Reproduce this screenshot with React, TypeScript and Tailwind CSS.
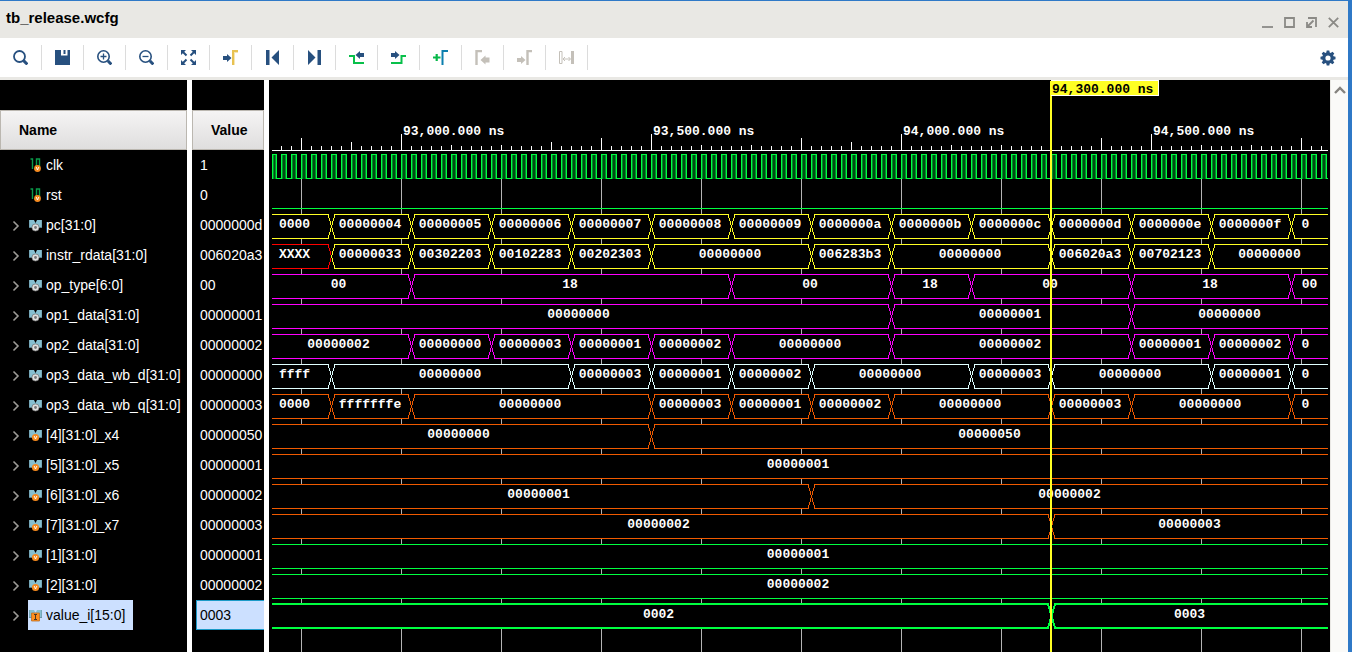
import { useLayoutEffect, useRef, useState, type ReactNode } from 'react'

type IconKind = 'scalar' | 'bus' | 'busVar' | 'busConst'

interface Signal {
  name: string
  value: string
  icon: IconKind
  selected?: boolean
}

interface Bus {
  color: string
  // values.length === edges.length + 1
  edges: number[]
  values: string[]
  firstColor?: string
  bold?: boolean
}

const NAVY = '#27507f'
const GRAY = '#c4c0b9'
const GREEN = '#00ff40'
const YELLOW = '#ffff24'
const MAGENTA = '#ff00ff'
const CYAN = '#e0ffff'
const ORANGE = '#f05a00'

const signals: Signal[] = [
  { name: 'clk', value: '1', icon: 'scalar' },
  { name: 'rst', value: '0', icon: 'scalar' },
  { name: 'pc[31:0]', value: '0000000d', icon: 'bus' },
  { name: 'instr_rdata[31:0]', value: '006020a3', icon: 'bus' },
  { name: 'op_type[6:0]', value: '00', icon: 'bus' },
  { name: 'op1_data[31:0]', value: '00000001', icon: 'bus' },
  { name: 'op2_data[31:0]', value: '00000002', icon: 'bus' },
  { name: 'op3_data_wb_d[31:0]', value: '00000000', icon: 'bus' },
  { name: 'op3_data_wb_q[31:0]', value: '00000003', icon: 'bus' },
  { name: '[4][31:0]_x4', value: '00000050', icon: 'busVar' },
  { name: '[5][31:0]_x5', value: '00000001', icon: 'busVar' },
  { name: '[6][31:0]_x6', value: '00000002', icon: 'busVar' },
  { name: '[7][31:0]_x7', value: '00000003', icon: 'busVar' },
  { name: '[1][31:0]', value: '00000001', icon: 'busVar' },
  { name: '[2][31:0]', value: '00000002', icon: 'busVar' },
  { name: 'value_i[15:0]', value: '0003', icon: 'busConst', selected: true },
]

const buses: Bus[] = [
  {
    color: YELLOW,
    edges: [92860, 93020, 93180, 93340, 93500, 93660, 93820, 93980, 94140, 94300, 94460, 94620, 94780],
    values: ['00000003', '00000004', '00000005', '00000006', '00000007', '00000008', '00000009', '0000000a', '0000000b', '0000000c', '0000000d', '0000000e', '0000000f', '00000010'],
  },
  {
    color: YELLOW,
    firstColor: '#ff0000',
    edges: [92860, 93020, 93180, 93340, 93500, 93820, 93980, 94300, 94460, 94620],
    values: ['XXXXXXXX', '00000033', '00302203', '00102283', '00202303', '00000000', '006283b3', '00000000', '006020a3', '00702123', '00000000'],
  },
  {
    color: MAGENTA,
    edges: [93020, 93660, 93980, 94140, 94460, 94780],
    values: ['00', '18', '00', '18', '00', '18', '00'],
  },
  { color: MAGENTA, edges: [93980, 94460], values: ['00000000', '00000001', '00000000'] },
  {
    color: MAGENTA,
    edges: [93020, 93180, 93340, 93500, 93660, 93980, 94460, 94620, 94780],
    values: ['00000002', '00000000', '00000003', '00000001', '00000002', '00000000', '00000002', '00000001', '00000002', '00000000'],
  },
  {
    color: CYAN,
    edges: [92860, 93340, 93500, 93660, 93820, 94140, 94300, 94620, 94780],
    values: ['ffffffff', '00000000', '00000003', '00000001', '00000002', '00000000', '00000003', '00000000', '00000001', '00000000'],
  },
  {
    color: ORANGE,
    edges: [92860, 93020, 93500, 93660, 93820, 93980, 94300, 94460, 94780],
    values: ['00000000', 'fffffffe', '00000000', '00000003', '00000001', '00000002', '00000000', '00000003', '00000000', '00000000'],
  },
  { color: ORANGE, edges: [93500], values: ['00000000', '00000050'] },
  { color: ORANGE, edges: [], values: ['00000001'] },
  { color: ORANGE, edges: [93820], values: ['00000001', '00000002'] },
  { color: ORANGE, edges: [94300], values: ['00000002', '00000003'] },
  { color: GREEN, edges: [], values: ['00000001'] },
  { color: GREEN, edges: [], values: ['00000002'] },
  { color: GREEN, edges: [94300], values: ['0002', '0003'], bold: true },
]

const ROW = 30
const FIRST_BUS = 134
const LEFT = 3
const CURSOR = 94300

// Top of each 100 ns tick, repeating every 1000 ns
const TICK_TOPS = [54, 65, 65, 62, 58, 54, 65, 65, 58, 62]

// 1 px per 2 ns, 93,000 ns sits at x = 132
const xAt = (ns: number) => 132 + (ns - 93000) / 2

// Shorten a bus value so that it fits between two transitions
function fit(text: string, width: number) {
  if (text.length * 8 <= width - 12) return text
  return text.slice(0, Math.max(0, Math.floor((width - 24) / 8)))
}

function BusWave({ bus, top, right }: { bus: Bus; top: number; right: number }) {
  const bottom = top + 24
  const xs = bus.edges.map(xAt).filter((x) => x < right - 4)
  const starts = [LEFT, ...xs]
  const sw = bus.bold ? 2 : 1
  const o = bus.bold ? 0 : 0.5

  return (
    <g>
      <rect x={LEFT} y={top} width={right - LEFT} height={25} fill="#000" />
      {starts.map((start, i) => {
        const end = xs[i] ?? right
        const first = i === 0
        const last = i === xs.length
        const mid = top + 12 + o
        let d = ''
        if (first) {
          d = `M${start} ${top + o}H`
        } else {
          d = `M${start + 0.5} ${mid}L${start + 4} ${top + o}H`
        }
        d += last ? `${end}` : `${end - 3}L${end + 0.5} ${mid}L${end - 3} ${bottom + o}`
        if (last) d += `M${end} ${bottom + o}`
        d += `H${first ? start : start + 4}`
        if (!first) d += `L${start + 0.5} ${mid}`
        const from = first ? -1 : start
        const to = last ? right + 2 : end
        const text = fit(bus.values[i], end - start + (first ? 3 : 2))
        const cut = text !== bus.values[i]
        return (
          <g key={start}>
            <path
              d={d}
              fill="none"
              stroke={first && bus.firstColor ? bus.firstColor : bus.color}
              strokeWidth={sw}
              shapeRendering="crispEdges"
            />
            <text x={(from + to) / 2 - (cut ? 5 : 1)} y={top + 14} textAnchor="middle" fill="#fff">
              {text}
            </text>
          </g>
        )
      })}
    </g>
  )
}

function Ruler({ right }: { right: number }) {
  const ticks: ReactNode[] = []
  for (let ns = 92760; xAt(ns) < right; ns += 20) {
    const x = xAt(ns) + 0.5
    const y = ns % 100 === 0 ? TICK_TOPS[(ns % 1000) / 100] : 66
    ticks.push(<path key={ns} d={`M${x} ${y}V70`} />)
  }
  return (
    <g stroke="#fff" shapeRendering="crispEdges">
      {ticks}
      <path d={`M${LEFT} 70.5H${right}`} />
    </g>
  )
}

function Clock({ right }: { right: number }) {
  const pulses: ReactNode[] = []
  let d = `M${LEFT} 74.5`
  for (let ns = 92740; xAt(ns) < right; ns += 20) {
    const x0 = Math.max(LEFT, xAt(ns))
    const x1 = Math.min(right, xAt(ns) + 5)
    if (x1 <= LEFT) continue
    pulses.push(
      <g key={ns}>
        <rect x={x0} y={75} width={x1 - x0} height={24} fill="#00902a" />
        <rect x={x0 + 2} y={75} width={Math.max(0, x1 - x0 - 3)} height={24} fill="#004d14" />
      </g>,
    )
    d += `M${x0 + 0.5} 98.5V74.5H${x1 + 0.5}V98.5H${Math.min(right, xAt(ns) + 10)}`
  }
  return (
    <g shapeRendering="crispEdges">
      {pulses}
      <path d={d} fill="none" stroke={GREEN} />
    </g>
  )
}

function WaveView() {
  const ref = useRef<HTMLDivElement>(null)
  const [size, setSize] = useState({ width: 1061, height: 572 })

  useLayoutEffect(() => {
    const el = ref.current
    if (!el) return
    const measure = () => setSize({ width: el.clientWidth, height: el.clientHeight })
    measure()
    const observer = new ResizeObserver(measure)
    observer.observe(el)
    return () => observer.disconnect()
  }, [])

  const right = size.width - 2
  const grid: number[] = []
  for (let ns = 92800; xAt(ns) < right; ns += 200) grid.push(xAt(ns))
  const labels = [93000, 93500, 94000, 94500].filter((ns) => xAt(ns) < right)
  const cx = xAt(CURSOR)
  const fmt = (ns: number) => `${ns.toLocaleString('en-US')}.000 ns`

  return (
    <div ref={ref} className="min-w-0 flex-1 overflow-hidden bg-black">
      <svg
        className="block h-full w-full font-['Liberation_Mono',monospace] text-[13px] font-bold"
        role="img"
        aria-label="Waveforms"
      >
        <g stroke="#b4b4b4" shapeRendering="crispEdges">
          {grid.map((x) => (
            <path key={x} d={`M${x + 0.5} 99V${size.height}`} />
          ))}
        </g>
        <Ruler right={right} />
        {labels.map((ns) => (
          <text key={ns} x={xAt(ns) + 2} y={55} fill="#fff">
            {fmt(ns)}
          </text>
        ))}
        <Clock right={right} />
        <path d={`M${LEFT} 128.5H${right}`} stroke={GREEN} shapeRendering="crispEdges" />
        {buses.map((bus, i) => (
          <BusWave key={i} bus={bus} top={FIRST_BUS + i * ROW} right={right} />
        ))}
        <rect x={cx - 1} y={1} width={2} height={size.height} fill={YELLOW} />
        <rect x={cx} y={0} width={108} height={16} fill="#fff" />
        <rect x={cx} y={1} width={107} height={14} fill={YELLOW} />
        <text x={cx + 1} y={13} fill="#000">
          {fmt(CURSOR)}
        </text>
      </svg>
    </div>
  )
}

function SignalIcon({ kind }: { kind: IconKind }) {
  if (kind === 'scalar') {
    return (
      <svg width="13" height="16" viewBox="0 0 13 16" className="shrink-0">
        <path d="M1.500 2h2v10M5 12h2.500V2h3v7" fill="none" stroke="#0a9a4a" strokeWidth="1.400" />
        <circle cx="8.500" cy="11.500" r="3.400" fill="#f58a1f" />
        <path d="M7.200 10l1.300 3 1.300-3" fill="none" stroke="#fff" strokeWidth=".9" />
      </svg>
    )
  }
  return (
    <svg width="13" height="16" viewBox="0 0 13 16" className="shrink-0">
      <path d="M0 3h5l1.500 3L8 3h5v7.500H8.500L6.500 7l-2 3.500H0z" fill="#86bfd0" />
      <path d="M0 3v7.500h3.500M13 3v7.500h-3.500" fill="none" stroke="#5d8795" strokeWidth=".8" />
      {kind === 'bus' && (
        <>
          <circle cx="6.500" cy="10.500" r="3.600" fill="#dedede" stroke="#6b6b6b" strokeWidth=".7" />
          <circle cx="6.500" cy="10.500" r="1.400" fill="#777" />
        </>
      )}
      {kind === 'busVar' && (
        <>
          <circle cx="6.500" cy="10.500" r="3.600" fill="#f58a1f" />
          <path d="M5.200 9l1.300 3 1.300-3" fill="none" stroke="#fff" strokeWidth=".9" />
        </>
      )}
      {kind === 'busConst' && (
        <>
          <path d="M2.500 6h8v8h-8z" fill="#ff8f1c" stroke="#b8702a" strokeWidth=".8" />
          <path d="M5 7.500h3M5 12.500h3M6.500 7.500v5" stroke="#4a3520" strokeWidth="1" />
        </>
      )}
    </svg>
  )
}

const tools: { label: string; disabled?: boolean; art: ReactNode }[] = [
  {
    label: 'Search',
    art: (
      <>
        <circle cx="6.500" cy="6.500" r="5.500" fill="none" stroke={NAVY} strokeWidth="1.800" />
        <path d="M10.600 10.600l3.800 3.800" stroke={NAVY} strokeWidth="3" />
      </>
    ),
  },
  {
    label: 'Save',
    art: <path d="M0 0h6v5.500h6.500V0H15v15H0zM8.500 0h2v4h-2z" fill={NAVY} />,
  },
  {
    label: 'Zoom in',
    art: (
      <>
        <circle cx="6.500" cy="6.500" r="5.700" fill="none" stroke={NAVY} strokeWidth="1.600" />
        <path d="M10.800 10.800l3.600 3.600" stroke={NAVY} strokeWidth="3" />
        <path d="M3.500 6.500h6M6.500 3.500v6" stroke={NAVY} strokeWidth="1.300" />
      </>
    ),
  },
  {
    label: 'Zoom out',
    art: (
      <>
        <circle cx="6.500" cy="6.500" r="5.700" fill="none" stroke={NAVY} strokeWidth="1.600" />
        <path d="M10.800 10.800l3.600 3.600" stroke={NAVY} strokeWidth="3" />
        <path d="M3.500 6.500h6" stroke={NAVY} strokeWidth="1.300" />
      </>
    ),
  },
  {
    label: 'Zoom fit',
    art: (
      <>
        <path d="M0 0h5L0 5zM15 0v5l-5-5zM0 15v-5l5 5zM15 15h-5l5-5z" fill={NAVY} />
        <path d="M1.500 1.500L5.500 5.500M13.500 1.500l-4 4M1.500 13.500l4-4M13.500 13.500l-4-4" stroke={NAVY} strokeWidth="2" />
      </>
    ),
  },
  {
    label: 'Go to cursor',
    art: (
      <>
        <path d="M0 6h4V4l4.500 4L4 12v-2H0z" fill={NAVY} />
        <path d="M9 0h6v3h-3v12H9z" fill="#f6e6b4" />
        <path d="M9 0h6v2h-4v13H9z" fill="#e8c252" />
      </>
    ),
  },
  {
    label: 'Go to start',
    art: <path d="M1 0h3.500v15H1zM14 0v15L6.500 7.500z" fill={NAVY} />,
  },
  {
    label: 'Go to end',
    art: <path d="M1 0v15l7.500-7.500zM10.500 0H14v15h-3.500z" fill={NAVY} />,
  },
  {
    label: 'Previous transition',
    art: (
      <>
        <path d="M0 6h5v7h10" fill="none" stroke="#08c04a" strokeWidth="2" />
        <path d="M15 3h-4V1L6.500 5 11 9V7h4z" fill={NAVY} />
      </>
    ),
  },
  {
    label: 'Next transition',
    art: (
      <>
        <path d="M0 13h10.500V6H15" fill="none" stroke="#08c04a" strokeWidth="2" />
        <path d="M0 3h4V1l4.500 4L4 9V7H0z" fill={NAVY} />
      </>
    ),
  },
  {
    label: 'Add marker',
    art: (
      <>
        <path d="M0 7.500h7.500M3.700 4v7" stroke="#08b84a" strokeWidth="2.200" />
        <path d="M9.500 15V1H15" fill="none" stroke="#0b7fae" strokeWidth="2" />
      </>
    ),
  },
  {
    label: 'Previous marker',
    disabled: true,
    art: (
      <>
        <path d="M1.500 15V1H7" fill="none" stroke={GRAY} strokeWidth="2.400" />
        <path d="M14.500 7.500h-4v-2L5.500 10l5 4.500v-2h4z" fill={GRAY} />
      </>
    ),
  },
  {
    label: 'Next marker',
    disabled: true,
    art: (
      <>
        <path d="M10.500 15V1H15" fill="none" stroke={GRAY} strokeWidth="2.400" />
        <path d="M0 8h4V6l4.500 4L4 14v-2H0z" fill={GRAY} />
      </>
    ),
  },
  {
    label: 'Swap cursors',
    disabled: true,
    art: (
      <>
        <path d="M.5 1.500h2.500v12H.5z" fill="none" stroke={GRAY} />
        <path d="M12 1h3v13h-3z" fill={GRAY} />
        <path d="M4 9h7M6 7L4 9l2 2M9.500 7l2 2-2 2" fill="none" stroke={GRAY} />
      </>
    ),
  },
]

const windowButtons = [
  { label: 'Minimize', d: 'M0 10h11' },
  { label: 'Maximize', d: 'M1 1h9v9H1z' },
  { label: 'Float', d: 'M2 1h8v9M7.500 3.500L2 9M1 5v5h5' },
  { label: 'Close', d: 'M.8 .8l9.400 9.400M10.200 .8L.8 10.200' },
]

function Chevron() {
  return (
    <svg width="8" height="12" viewBox="0 0 8 12" fill="none">
      <path d="M1.500 1.500L6 6l-4.500 4.500" stroke="#9c9a96" strokeWidth="1.600" />
    </svg>
  )
}

export default function App() {
  return (
    <div className="flex h-screen flex-col overflow-hidden border-t border-r-4 border-[#2f79c7] bg-white font-['Liberation_Sans',Arial,sans-serif] text-sm text-black">
      <header className="flex h-[37px] shrink-0 items-center justify-between bg-[#e9e8e4] pr-[9px] pl-1.5">
        <h1 className="pb-1 text-[15px] font-bold">tb_release.wcfg</h1>
        <div className="flex gap-[11px] pt-1.5">
          {windowButtons.map((b) => (
            <button key={b.label} type="button" aria-label={b.label}>
              <svg width="11" height="11" viewBox="0 0 11 11" fill="none" stroke="#8b8a86" strokeWidth="1.800">
                <path d={b.d} />
              </svg>
            </button>
          ))}
        </div>
      </header>

      {/* Toolbar */}
      <div className="flex h-[42px] shrink-0 items-center justify-between border-b-3 border-[#e9e8e4] pr-3">
        <div className="flex">
          {tools.map((tool) => (
            <button
              key={tool.label}
              type="button"
              aria-label={tool.label}
              disabled={tool.disabled}
              className="flex h-[25px] w-[42px] items-center justify-center border-r border-[#dcdcdc]"
            >
              <svg width="15" height="15" viewBox="0 0 15 15">
                {tool.art}
              </svg>
            </button>
          ))}
        </div>
        <button type="button" aria-label="Settings">
          <svg width="16" height="16" viewBox="0 0 16 16" fill={NAVY}>
            <path
              fillRule="evenodd"
              d="M6.700 .5h2.600l.4 2 1 .4 1.700-1.200 1.900 1.900-1.200 1.700.4 1 2 .4v2.600l-2 .4-.4 1 1.200 1.700-1.900 1.900-1.700-1.200-1 .4-.4 2H6.700l-.4-2-1-.4-1.700 1.200-1.900-1.900 1.200-1.700-.4-1-2-.4V6.700l2-.4.4-1-1.200-1.700 1.900-1.900 1.700 1.200 1-.4zM8 5.400a2.600 2.600 0 1 0 0 5.200 2.600 2.600 0 0 0 0-5.200z"
            />
          </svg>
        </button>
      </div>

      <main className="flex min-h-0 flex-1">
        {/* Signal names */}
        <section className="w-[187px] shrink-0 overflow-hidden bg-black pt-[30px] text-white">
          <h2 className="flex h-10 items-center border border-[#bbb7b0] bg-linear-to-b from-[#f5f4f4] to-[#dfdede] pl-[18px] font-bold text-black">
            Name
          </h2>
          <ul>
            {signals.map((s) => (
              <li key={s.name} className="flex h-[30px] items-center">
                {s.icon === 'scalar' ? (
                  <span className="w-7" />
                ) : (
                  <button type="button" aria-label={`Expand ${s.name}`} className="flex w-7 shrink-0 pt-0.5 pl-3">
                    <Chevron />
                  </button>
                )}
                <span
                  className={
                    s.selected
                      ? 'flex h-full items-center gap-1 bg-[#cce0ff] pr-2 pl-px text-black'
                      : 'flex h-full items-center gap-1 pl-px'
                  }
                >
                  <SignalIcon kind={s.icon} />
                  <span className="whitespace-nowrap">{s.name}</span>
                </span>
              </li>
            ))}
          </ul>
        </section>

        {/* Values at the cursor */}
        <section className="ml-[5px] w-[72px] shrink-0 overflow-hidden bg-black pt-[30px] text-white">
          <h2 className="flex h-10 items-center border border-[#bbb7b0] bg-linear-to-b from-[#f5f4f4] to-[#dfdede] pl-[18px] font-bold text-black">
            Value
          </h2>
          <ul>
            {signals.map((s) => (
              <li
                key={s.name}
                className={
                  s.selected
                    ? 'ml-1 flex h-[30px] items-center border border-r-0 border-[#1b9ac8] bg-[#cce0ff] pl-[3px] text-black'
                    : 'flex h-[30px] items-center pl-2'
                }
              >
                {s.value}
              </li>
            ))}
          </ul>
        </section>

        <div className="w-[5px] shrink-0 bg-white" />
        <WaveView />

        <div className="w-[18px] shrink-0 border-l border-[#e9e8e4] bg-[#fafaf8] pt-1.5 pl-[3px]">
          <button type="button" aria-label="Scroll up" className="block">
            <svg width="12" height="8" viewBox="0 0 12 8" fill="none">
              <path d="M1 7l5-5 5 5" stroke="#85837f" strokeWidth="2.400" />
            </svg>
          </button>
        </div>
      </main>
    </div>
  )
}
